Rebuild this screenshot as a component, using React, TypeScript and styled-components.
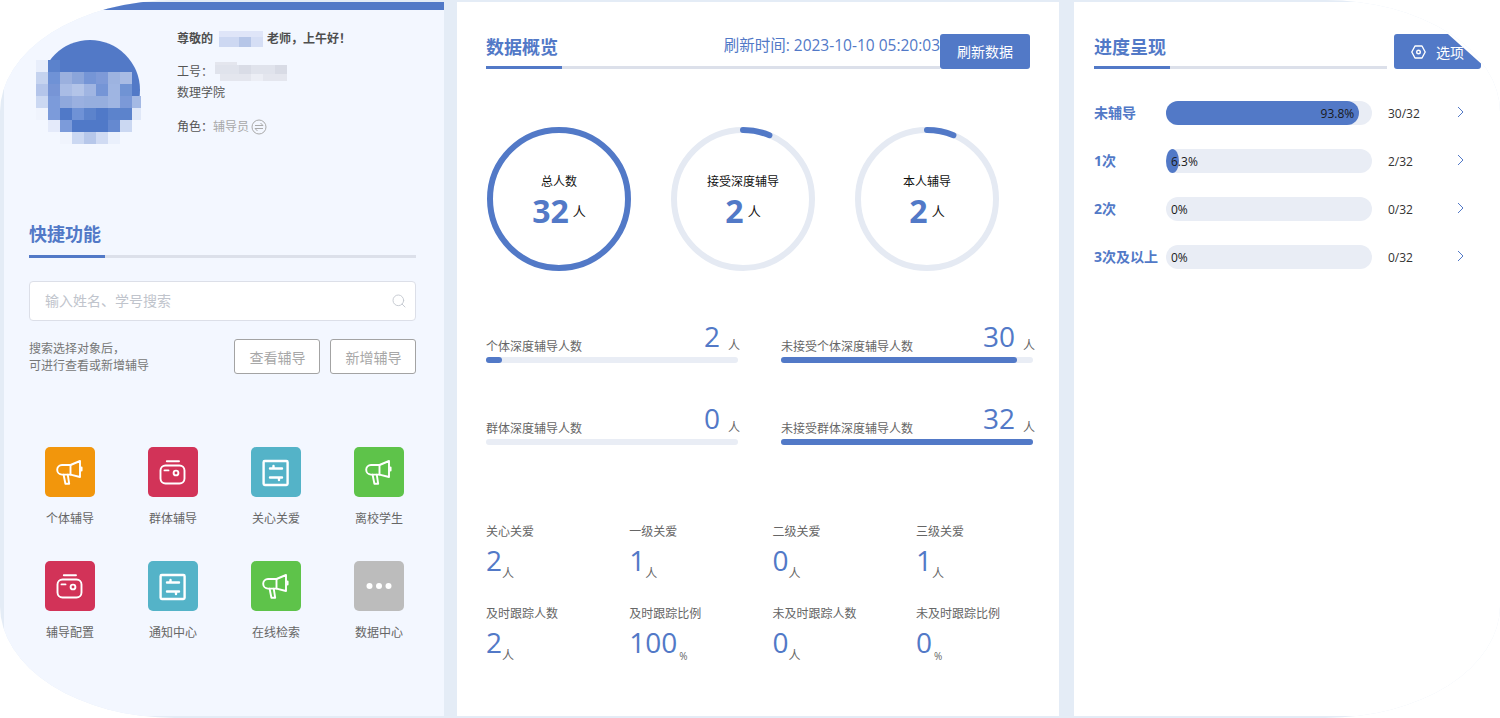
import React from "react";
import styled, { createGlobalStyle } from "styled-components";
import { Search } from "lucide-react";

const BLUE = "#5279c7";

const Global = createGlobalStyle`
  html, body { margin: 0; padding: 0; background: #fff; }
  body { font-family: "Open Sans", "Noto Sans CJK SC", sans-serif; font-size: 12px; color: #606266; overflow: hidden; }
  * { box-sizing: border-box; }
`;

const Shell = styled.div`
  width: 1500px;
  height: 718px;
  padding: 2px 0 2px 4px;
  display: flex;
  background: #e4ecf6;
  border-radius: 175px / 112px;
  overflow: hidden;
`;
const LeftPanel = styled.section`
  width: 440px;
  flex: none;
  background: #f3f7ff;
  border-top: 8px solid ${BLUE};
  padding-right: 28px;
`;
const CenterPanel = styled.section`
  width: 602px;
  flex: none;
  margin-left: 13px;
  background: #fff;
  padding: 32px 29px 0;
`;
const RightPanel = styled.section`
  flex: 1;
  margin-left: 15px;
  background: #fff;
  padding: 32px 19px 0 20px;
`;

/* profile */
const Profile = styled.div`
  height: 212px;
  display: flex;
  padding: 19px 0 0 32px;
`;
const AvatarBox = styled.svg`
  width: 106px;
  height: 106px;
  margin-top: 11px;
  flex: none;
`;
const Info = styled.div`
  margin-left: 35px;
  line-height: 18px;
  color: #555;
`;
const Greeting = styled.div`
  display: flex;
  align-items: center;
  margin-top: 1px;
  font-weight: 700;
  color: #4f4f4f;
`;
const InfoLine = styled.div<{ $mt: number }>`
  display: flex;
  align-items: center;
  margin-top: ${(p) => p.$mt}px;
`;
const Mosaic = styled.svg<{ $ml: number; $mr: number }>`
  margin-left: ${(p) => p.$ml}px;
  margin-right: ${(p) => p.$mr}px;
  flex: none;
`;
const RoleName = styled.span`
  color: #a8a8a8;
`;
const SwitchIcon = styled.svg`
  width: 16px;
  height: 16px;
  margin-left: 2px;
`;

/* section head */
const HeadRow = styled.div`
  display: flex;
  align-items: flex-end;
`;
const HeadMain = styled.div`
  flex: 1;
  min-width: 0;
`;
const TitleRow = styled.div`
  height: 32px;
  padding-top: 1px;
  display: flex;
  justify-content: space-between;
`;
const Title = styled.h2`
  margin: 0;
  font-size: 18px;
  line-height: 24px;
  font-weight: 700;
  color: ${BLUE};
`;
const Rule = styled.div`
  height: 3px;
  background: #dce0ea;
`;
const RuleAccent = styled.div`
  width: 76px;
  height: 3px;
  background: ${BLUE};
`;
const RefreshTime = styled.span`
  font-size: 15.5px;
  line-height: 20px;
  color: ${BLUE};
  white-space: nowrap;
`;
const PrimaryButton = styled.button`
  width: 90px;
  height: 35px;
  flex: none;
  border: 0;
  border-radius: 3px;
  background: ${BLUE};
  color: #fff;
  font: inherit;
  font-size: 14px;
  padding: 0 0 2px;
`;
const OptionButton = styled.button`
  width: 87px;
  height: 35px;
  flex: none;
  margin-left: 7px;
  border: 0;
  padding: 0 0 0 17px;
  display: flex;
  align-items: center;
  gap: 10px;
  background: ${BLUE};
  color: #fff;
  font: inherit;
  font-size: 14px;
  border-radius: 3px;
  clip-path: polygon(0 0, 62% 0, 100% 84%, 100% 100%, 0 100%);
`;

/* quick section */
const Quick = styled.div`
  margin-left: 25px;
`;
const QuickTitleRow = styled.div`
  padding-bottom: 9px;
`;
const SearchBox = styled.label`
  height: 40px;
  margin-top: 23px;
  display: flex;
  align-items: center;
  padding: 0 8px 0 15px;
  background: #fff;
  border: 1px solid #dcdfe8;
  border-radius: 4px;
  color: #c4c8d0;
`;
const SearchInput = styled.input`
  flex: 1;
  border: 0;
  outline: 0;
  background: transparent;
  font: inherit;
  font-size: 14px;
  padding: 0 0 2px;
  &::placeholder { color: #c0c4cc; opacity: 1; }
`;
const Actions = styled.div`
  margin-top: 18px;
  height: 35px;
  display: flex;
  align-items: center;
  gap: 10px;
`;
const Hint = styled.div`
  flex: 1;
  line-height: 17px;
  color: #777;
`;
const GhostButton = styled.button`
  width: 86px;
  height: 35px;
  border: 1px solid #a3a3a3;
  border-radius: 3px;
  background: #fff;
  color: #a8a8a8;
  font: inherit;
  font-size: 14px;
  padding: 0 0 0 1px;
`;
const AppGrid = styled.div`
  margin: 73px 0 0 41px;
  display: grid;
  grid-template-columns: repeat(4, 50px);
  column-gap: 53px;
  row-gap: 34px;
`;
const AppItem = styled.div`
  display: flex;
  flex-direction: column;
  align-items: center;
`;
const AppIcon = styled.div<{ $bg: string }>`
  width: 50px;
  height: 50px;
  border-radius: 5px;
  background: ${(p) => p.$bg};
`;
const AppGlyph = styled.svg<{ $w?: number }>`
  display: block;
  width: 50px;
  height: 50px;
  fill: none;
  stroke: #fff;
  stroke-width: ${(p) => p.$w ?? 1.9};
  stroke-linejoin: round;
  stroke-linecap: round;
`;
const AppLabel = styled.div`
  margin-top: 14px;
  line-height: 16px;
  white-space: nowrap;
  color: #666;
`;

/* rings */
const Rings = styled.div`
  margin: 58px 0 0 1px;
  display: flex;
  gap: 40px;
`;
const Ring = styled.div`
  width: 144px;
  height: 144px;
  display: grid;
`;
const RingSvg = styled.svg`
  grid-area: 1 / 1;
  width: 144px;
  height: 144px;
`;
const RingBody = styled.div`
  grid-area: 1 / 1;
  padding-top: 46px;
  display: flex;
  flex-direction: column;
  align-items: center;
  color: #111;
`;
const RingLabel = styled.div`
  line-height: 18px;
`;
const RingValue = styled.div`
  display: flex;
  align-items: center;
  line-height: 40px;
`;
const RingNumber = styled.span`
  font-size: 32px;
  font-weight: 700;
  color: ${BLUE};
`;
const RingUnit = styled.span`
  margin-left: 4px;
  font-size: 13px;
`;

/* bars */
const BarGrid = styled.div`
  margin-top: 48px;
  display: grid;
  grid-template-columns: 252px 252px;
  column-gap: 43px;
  row-gap: 38px;
`;
const BarHead = styled.div`
  height: 36px;
  display: flex;
  align-items: flex-end;
`;
const BarLabel = styled.div`
  flex: 1;
  line-height: 18px;
  margin-bottom: -1px;
  color: #666;
`;
const BarValue = styled.div`
  font-size: 28px;
  line-height: 36px;
  padding-bottom: 1px;
  color: ${BLUE};
`;
const BarUnit = styled.div`
  margin: 0 -2px 0 8px;
  line-height: 18px;
  color: #666;
`;
const BarTrack = styled.div`
  margin-top: 2px;
  height: 6px;
  border-radius: 3px;
  background: #e9edf5;
`;
const BarFill = styled.div`
  height: 100%;
  border-radius: 3px;
  background: ${BLUE};
`;

/* stats */
const StatGrid = styled.div`
  margin-top: 78px;
  display: grid;
  grid-template-columns: repeat(4, 143.3px);
  row-gap: 26px;
`;
const StatLabel = styled.div`
  line-height: 18px;
  white-space: nowrap;
  color: #666;
`;
const StatValue = styled.div`
  margin-top: 2px;
  display: flex;
  align-items: flex-end;
  height: 36px;
`;
const StatNumber = styled.span`
  font-size: 28px;
  line-height: 36px;
  margin-bottom: 1px;
  color: ${BLUE};
`;
const StatUnit = styled.span<{ $small?: boolean }>`
  font-size: ${(p) => (p.$small ? 10 : 12)}px;
  line-height: 14px;
  margin: 0 0 -2px ${(p) => (p.$small ? 2 : 0)}px;
  color: #666;
`;

/* progress */
const ProgressList = styled.div`
  margin-top: 32px;
  display: flex;
  flex-direction: column;
  gap: 24px;
`;
const ProgressRow = styled.div`
  height: 24px;
  display: flex;
  align-items: center;
`;
const ProgressLabel = styled.div`
  width: 72px;
  flex: none;
  padding-bottom: 2px;
  font-size: 14px;
  font-weight: 700;
  color: ${BLUE};
  white-space: nowrap;
`;
const ProgressTrack = styled.div`
  width: 206px;
  height: 24px;
  flex: none;
  border-radius: 12px;
  background: #e9edf5;
`;
const ProgressFill = styled.div<{ $end: boolean }>`
  height: 100%;
  border-radius: ${(p) => (p.$end ? "12px" : "50%")};
  background: ${BLUE};
  display: flex;
  align-items: center;
  justify-content: ${(p) => (p.$end ? "flex-end" : "flex-start")};
  color: #1a1a1a;
  white-space: nowrap;
`;
const ProgressText = styled.span<{ $end: boolean }>`
  flex: none;
  padding: ${(p) => (p.$end ? "0 5px 0 0" : "0 0 0 5px")};
`;
const ProgressCount = styled.div`
  width: 69px;
  margin-left: 16px;
  flex: none;
  color: #333;
`;
const Chevron = styled.svg`
  width: 7px;
  height: 12px;
  margin-top: -2px;
  fill: none;
  stroke: ${BLUE};
  stroke-width: 1;
`;

/* drawings */
const avatarCells: [number, number, string][] = [
  [0, 0, "#e8eefb"], [1, 0, "#5b82cc"],
  [0, 1, "#c5d3ef"], [1, 1, "#6f92d6"], [2, 1, "#9bb0de"], [3, 1, "#8ba5da"], [4, 1, "#7595d6"], [5, 1, "#7e9ad8"], [6, 1, "#9db3e0"], [7, 1, "#a8bbe4"],
  [0, 2, "#b4c5ea"], [1, 2, "#7795d6"], [2, 2, "#a9bce5"], [3, 2, "#b3c4e8"], [4, 2, "#a0b5e2"], [5, 2, "#7595d6"], [6, 2, "#9fb5e2"], [7, 2, "#7093d4"],
  [0, 3, "#cbd8f2"], [1, 3, "#7c9bda"], [2, 3, "#8fa8dc"], [3, 3, "#9ab0e0"], [4, 3, "#96aede"], [5, 3, "#96aede"], [6, 3, "#9fb5e2"], [7, 3, "#7b99d8"], [8, 3, "#a4b9e4"],
  [0, 4, "#f0f4fd"], [1, 4, "#7c9bda"], [2, 4, "#5079c8"], [3, 4, "#6f92d6"], [4, 4, "#5c83cc"], [5, 4, "#5079c8"], [6, 4, "#5c83cc"], [7, 4, "#5c83cc"], [8, 4, "#e0e8f8"],
  [1, 5, "#e4eafa"], [2, 5, "#7c9bda"], [3, 5, "#5079c8"], [4, 5, "#5079c8"], [5, 5, "#5079c8"], [6, 5, "#6589d0"], [7, 5, "#cbd8f2"],
  [2, 6, "#f0f4fd"], [3, 6, "#cbd8f2"], [4, 6, "#b6c7ea"], [5, 6, "#d0dbf3"], [6, 6, "#eaf0fc"],
];

const Avatar = () => (
  <AvatarBox viewBox="0 0 106 106">
    <circle cx="54" cy="50" r="50" fill={BLUE} />
    {avatarCells.map(([c, r, color]) => (
      <rect key={`${c}-${r}`} x={c * 12} y={20 + r * 12} width={c === 8 ? 9 : 12} height="12" fill={color} />
    ))}
  </AvatarBox>
);

const NameMosaic = () => (
  <Mosaic $ml={6} $mr={4} width="44" height="16" viewBox="0 0 44 16">
    <rect x="0" y="0" width="44" height="6" fill="#dfe5f8" />
    <rect x="0" y="6" width="44" height="10" fill="#cdd8f2" />
    <rect x="20" y="6" width="12" height="10" fill="#b6c6e8" />
    <rect x="32" y="6" width="12" height="10" fill="#d5def5" />
  </Mosaic>
);

const IdMosaic = () => (
  <Mosaic $ml={2} $mr={0} width="72" height="19" viewBox="0 0 72 19">
    <rect x="0" y="0" width="22" height="3" fill="#e4e6ee" />
    <rect x="0" y="3" width="72" height="9" fill="#e0e3ec" />
    <rect x="24" y="3" width="12" height="9" fill="#d9dce6" />
    <rect x="60" y="3" width="12" height="9" fill="#d8dbe5" />
    <rect x="5" y="12" width="67" height="7" fill="#e4e6ee" />
    <rect x="36" y="12" width="12" height="7" fill="#eceef5" />
  </Mosaic>
);

const Megaphone = () => (
  <AppGlyph viewBox="0 0 50 50">
    <path d="M35 14 L25.5 18 H17 a4.8 4.8 0 0 0 0 9.6 H25.5 L35 30 Z" />
    <path d="M25.5 18 V27.6 M36.6 20.5 V23.5" />
    <path d="M18.6 27.8 L20.4 36.8 H24.2 L22.8 27.8" />
  </AppGlyph>
);
const Wallet = () => (
  <AppGlyph viewBox="0 0 50 50">
    <rect x="12.5" y="18.5" width="24" height="18" rx="5" />
    <path d="M18.8 14.2 H31 M16.5 23.4 H20.5" />
    <circle cx="28" cy="26" r="2.4" />
  </AppGlyph>
);
const Sliders = () => (
  <AppGlyph viewBox="0 0 50 50" $w={2.4}>
    <rect x="12.6" y="14" width="24" height="24" rx="1.2" />
    <path d="M19 21.5 H31 M22.5 19 V21.5 M19 30.5 H31 M28 30.5 V33" />
  </AppGlyph>
);
const Dots = () => (
  <AppGlyph viewBox="0 0 50 50">
    <circle cx="15.5" cy="25" r="3" fill="#fff" stroke="none" />
    <circle cx="25" cy="25" r="3" fill="#fff" stroke="none" />
    <circle cx="34.5" cy="25" r="3" fill="#fff" stroke="none" />
  </AppGlyph>
);

const apps = [
  { label: "个体辅导", bg: "#f2960c", glyph: <Megaphone /> },
  { label: "群体辅导", bg: "#d23358", glyph: <Wallet /> },
  { label: "关心关爱", bg: "#54b3c8", glyph: <Sliders /> },
  { label: "离校学生", bg: "#5ec34a", glyph: <Megaphone /> },
  { label: "辅导配置", bg: "#d23358", glyph: <Wallet /> },
  { label: "通知中心", bg: "#54b3c8", glyph: <Sliders /> },
  { label: "在线检索", bg: "#5ec34a", glyph: <Megaphone /> },
  { label: "数据中心", bg: "#bcbcbc", glyph: <Dots /> },
];

const rings = [
  { label: "总人数", value: 32, pct: 1 },
  { label: "接受深度辅导", value: 2, pct: 0.0625 },
  { label: "本人辅导", value: 2, pct: 0.0625 },
];

const bars = [
  { label: "个体深度辅导人数", value: 2, pct: 6.25 },
  { label: "未接受个体深度辅导人数", value: 30, pct: 93.75 },
  { label: "群体深度辅导人数", value: 0, pct: 0 },
  { label: "未接受群体深度辅导人数", value: 32, pct: 100 },
];

const stats = [
  { label: "关心关爱", value: "2", unit: "人" },
  { label: "一级关爱", value: "1", unit: "人" },
  { label: "二级关爱", value: "0", unit: "人" },
  { label: "三级关爱", value: "1", unit: "人" },
  { label: "及时跟踪人数", value: "2", unit: "人" },
  { label: "及时跟踪比例", value: "100", unit: "%" },
  { label: "未及时跟踪人数", value: "0", unit: "人" },
  { label: "未及时跟踪比例", value: "0", unit: "%" },
];

const progress = [
  { label: "未辅导", text: "93.8%", pct: 93.8, count: "30/32" },
  { label: "1次", text: "6.3%", pct: 6.3, count: "2/32" },
  { label: "2次", text: "0%", pct: 0, count: "0/32" },
  { label: "3次及以上", text: "0%", pct: 0, count: "0/32" },
];

const R = 69;
const CIRC = 2 * Math.PI * R;

export default function App() {
  return (
    <>
      <Global />
      <Shell>
        <LeftPanel>
          <Profile>
            <Avatar />
            <Info>
              <Greeting>
                尊敬的<NameMosaic />老师，上午好！
              </Greeting>
              <InfoLine $mt={14}>
                工号：<IdMosaic />
              </InfoLine>
              <InfoLine $mt={3}>数理学院</InfoLine>
              <InfoLine $mt={16}>
                角色：<RoleName>辅导员</RoleName>
                <SwitchIcon viewBox="0 0 16 16" fill="none" stroke="#aaa" strokeWidth="1">
                  <circle cx="8" cy="8" r="7" />
                  <path d="M4 6.5 H12 L9.5 4 M12 9.5 H4 L6.5 12" />
                </SwitchIcon>
              </InfoLine>
            </Info>
          </Profile>
          <Quick>
            <QuickTitleRow>
              <Title>快捷功能</Title>
            </QuickTitleRow>
            <Rule>
              <RuleAccent />
            </Rule>
            <SearchBox>
              <SearchInput placeholder="输入姓名、学号搜索" readOnly />
              <Search size={16} strokeWidth={1.4} />
            </SearchBox>
            <Actions>
              <Hint>
                搜索选择对象后，
                <br />
                可进行查看或新增辅导
              </Hint>
              <GhostButton>查看辅导</GhostButton>
              <GhostButton>新增辅导</GhostButton>
            </Actions>
          </Quick>
          <AppGrid>
            {apps.map((a) => (
              <AppItem key={a.label}>
                <AppIcon $bg={a.bg}>{a.glyph}</AppIcon>
                <AppLabel>{a.label}</AppLabel>
              </AppItem>
            ))}
          </AppGrid>
        </LeftPanel>

        <CenterPanel>
          <HeadRow>
            <HeadMain>
              <TitleRow>
                <Title>数据概览</Title>
                <RefreshTime>刷新时间: 2023-10-10 05:20:03</RefreshTime>
              </TitleRow>
              <Rule>
                <RuleAccent />
              </Rule>
            </HeadMain>
            <PrimaryButton>刷新数据</PrimaryButton>
          </HeadRow>

          <Rings>
            {rings.map((r) => (
              <Ring key={r.label}>
                <RingSvg viewBox="0 0 144 144" fill="none" strokeWidth="6">
                  <circle cx="72" cy="72" r={R} stroke={r.pct === 1 ? BLUE : "#e5eaf3"} />
                  {r.pct < 1 && (
                    <circle
                      cx="72"
                      cy="72"
                      r={R}
                      stroke={BLUE}
                      strokeLinecap="round"
                      strokeDasharray={`${CIRC * r.pct} ${CIRC}`}
                      transform="rotate(-90 72 72)"
                    />
                  )}
                </RingSvg>
                <RingBody>
                  <RingLabel>{r.label}</RingLabel>
                  <RingValue>
                    <RingNumber>{r.value}</RingNumber>
                    <RingUnit>人</RingUnit>
                  </RingValue>
                </RingBody>
              </Ring>
            ))}
          </Rings>

          <BarGrid>
            {bars.map((b) => (
              <div key={b.label}>
                <BarHead>
                  <BarLabel>{b.label}</BarLabel>
                  <BarValue>{b.value}</BarValue>
                  <BarUnit>人</BarUnit>
                </BarHead>
                <BarTrack>
                  <BarFill style={{ width: `${b.pct}%` }} />
                </BarTrack>
              </div>
            ))}
          </BarGrid>

          <StatGrid>
            {stats.map((s) => (
              <div key={s.label}>
                <StatLabel>{s.label}</StatLabel>
                <StatValue>
                  <StatNumber>{s.value}</StatNumber>
                  <StatUnit $small={s.unit === "%"}>{s.unit}</StatUnit>
                </StatValue>
              </div>
            ))}
          </StatGrid>
        </CenterPanel>

        <RightPanel>
          <HeadRow>
            <HeadMain>
              <TitleRow>
                <Title>进度呈现</Title>
              </TitleRow>
              <Rule>
                <RuleAccent />
              </Rule>
            </HeadMain>
            <OptionButton>
              <svg width="15" height="14" viewBox="0 0 15 14" fill="none" stroke="#fff" strokeWidth="1.4">
                <path d="M4 1 H11 L14.2 7 L11 13 H4 L0.8 7 Z" strokeLinejoin="round" />
                <circle cx="7.5" cy="7" r="1.8" />
              </svg>
              选项
            </OptionButton>
          </HeadRow>
          <ProgressList>
            {progress.map((p) => (
              <ProgressRow key={p.label}>
                <ProgressLabel>{p.label}</ProgressLabel>
                <ProgressTrack>
                  <ProgressFill $end={p.pct > 50} style={{ width: `${p.pct}%` }}>
                    <ProgressText $end={p.pct > 50}>{p.text}</ProgressText>
                  </ProgressFill>
                </ProgressTrack>
                <ProgressCount>{p.count}</ProgressCount>
                <Chevron viewBox="0 0 7 12">
                  <path d="M1 1 L6 6 L1 11" />
                </Chevron>
              </ProgressRow>
            ))}
          </ProgressList>
        </RightPanel>
      </Shell>
    </>
  );
}
